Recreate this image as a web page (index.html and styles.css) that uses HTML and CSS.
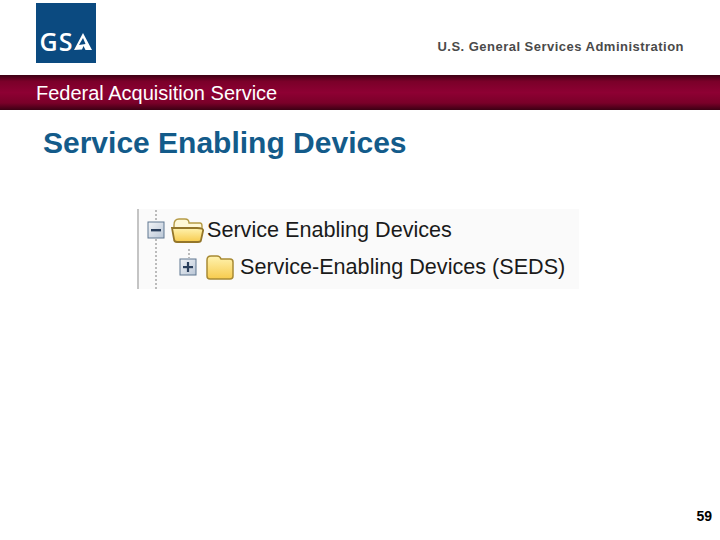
FILE: index.html
```html
<!DOCTYPE html>
<html>
<head>
  <title>Service Enabling Devices</title>
  <link rel="stylesheet" href="styles.css">
</head>
<body>
  <div class="slide">
    <div class="header">
      <div class="logo">
        <span class="logo-text">GS</span>
        <svg class="logo-a" width="18" height="17" viewBox="0 0 18 17">
          <path d="M9 0 L18 17 H11.5 L9.5 13 L8 16.5 L0 17 Z" fill="#fff"/>
          <path d="M9 5 L11.5 11 L5 12 Z" fill="#0b4a80"/>
        </svg>
      </div>
      <div class="agency">U.S. General Services Administration</div>
    </div>
    <div class="band">Federal Acquisition Service</div>
    <h1 class="title">Service Enabling Devices</h1>
    <div class="tree">
      <div class="guide guide-top"></div>
      <div class="guide guide-main"></div>
      <div class="guide guide-child"></div>
      <div class="tree-row">
        <svg class="toggle" width="18" height="18" viewBox="0 0 18 18">
          <defs>
            <linearGradient id="box" x1="0" y1="0" x2="1" y2="1">
              <stop offset="0" stop-color="#f2f4f7"/>
              <stop offset="1" stop-color="#b9c6d6"/>
            </linearGradient>
            <linearGradient id="fold" x1="0" y1="0" x2="0" y2="1">
              <stop offset="0" stop-color="#fff3b0"/>
              <stop offset="1" stop-color="#f7cb4d"/>
            </linearGradient>
          </defs>
          <rect x="1" y="1" width="16" height="16" fill="url(#box)" stroke="#5f7690"/>
          <rect x="4" y="8" width="10" height="2.4" fill="#2a3f5c"/>
        </svg>
        <svg class="folder" width="34" height="26" viewBox="0 0 34 26">
          <path d="M3 8 Q3 2 8 2 H14 Q18 2 18 6 H29 Q31 6 31 9 V12 H3 Z" fill="#fff8d6" stroke="#b59a45" stroke-width="1.4"/>
          <path d="M1 11 H26 Q33 11 32 14 L30 23 Q30 25 27 25 H6 Q3 25 3 22 Z" fill="url(#fold)" stroke="#94762a" stroke-width="1.8"/>
        </svg>
        <span>Service Enabling Devices</span>
      </div>
      <div class="tree-row child">
        <svg class="toggle" width="18" height="18" viewBox="0 0 18 18">
          <rect x="1" y="1" width="16" height="16" fill="url(#box)" stroke="#5f7690"/>
          <rect x="4" y="8" width="10" height="2.2" fill="#2a3f5c"/>
          <rect x="7.9" y="4" width="2.2" height="10" fill="#2a3f5c"/>
        </svg>
        <svg class="folder" width="30" height="26" viewBox="0 0 30 26">
          <path d="M2 6 Q2 2 6 2 H12 Q15 2 16 5 H25 Q28 5 28 8 V22 Q28 25 25 25 H5 Q2 25 2 22 Z" fill="url(#fold)" stroke="#a88a34" stroke-width="1.5"/>
        </svg>
        <span>Service-Enabling Devices (SEDS)</span>
      </div>
    </div>
    <div class="page-num">59</div>
  </div>
</body>
</html>
```

FILE: styles.css
```css
html, body {
  margin: 0;
  padding: 0;
}
body {
  background-color: #fff;
  font-family: "Liberation Sans", Arial, sans-serif;
}
.slide {
  width: 720px;
  height: 540px;
  display: flex;
  flex-direction: column;
  overflow: hidden;
}
.header {
  display: flex;
  justify-content: space-between;
  align-items: flex-start;
  height: 75px;
  padding: 3px 36px 0 36px;
  box-sizing: border-box;
}
.logo {
  width: 60px;
  height: 60px;
  background-color: #0b4a80;
  display: flex;
  align-items: flex-end;
  justify-content: center;
  padding-bottom: 10px;
  box-sizing: border-box;
  gap: 1px;
}
.logo-text {
  color: #fff;
  font-family: "Open Sans", sans-serif;
  font-size: 25px;
  line-height: 24px;
  font-weight: 600;
  letter-spacing: 1px;
}
.logo-a {
  margin-bottom: 3px;
}
.agency {
  margin-top: 36px;
  font-size: 13px;
  line-height: 16px;
  font-weight: bold;
  letter-spacing: 0.48px;
  color: #4a4a4a;
}
.band {
  height: 35px;
  padding: 7px 0 0 36px;
  box-sizing: border-box;
  font-size: 20px;
  line-height: 22px;
  color: #fff;
  background: linear-gradient(#3c0014 0%, #7a0029 18%, #8e0033 50%, #7a0029 80%, #3c0014 100%);
}
.title {
  margin: 16px 0 0 43px;
  font-size: 30px;
  line-height: 34px;
  font-weight: bold;
  color: #135b8a;
}
.tree {
  position: relative;
  width: 442px;
  height: 80px;
  margin: 49px 0 0 137px;
  padding-top: 8px;
  box-sizing: border-box;
  background-color: #fafafa;
  border-left: 2px solid #c4c4c4;
  display: flex;
  flex-direction: column;
  gap: 11px;
  font-size: 21.6px;
  color: #1a1a1a;
}
.guide {
  position: absolute;
  width: 2px;
  background: repeating-linear-gradient(#bbb 0, #bbb 2px, transparent 2px, transparent 4px);
}
.guide-top {
  left: 16px;
  top: 1px;
  height: 12px;
}
.guide-main {
  left: 16px;
  top: 30px;
  height: 50px;
}
.guide-child {
  left: 49px;
  top: 40px;
  height: 9px;
}
.tree-row {
  display: flex;
  align-items: center;
  height: 26px;
  padding-left: 8px;
}
.tree-row.child {
  padding-left: 40px;
}
.toggle {
  margin-right: 6px;
}
.child .toggle {
  margin-right: 8px;
}
.folder {
  margin-right: 2px;
}
.child .folder {
  margin-right: 5px;
}
.page-num {
  margin: auto 8px 16px auto;
  font-size: 14px;
  font-weight: bold;
  color: #000;
}
```
